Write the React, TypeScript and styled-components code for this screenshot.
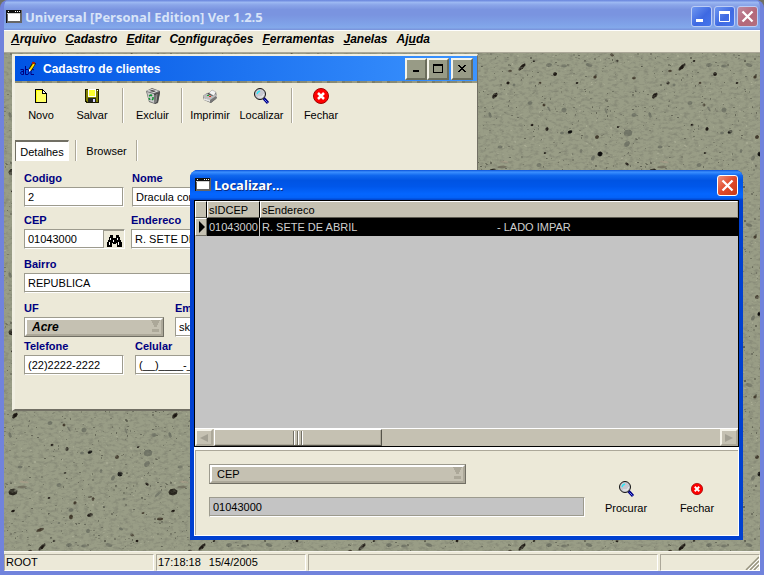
import React, { useState } from "react";
import styled, { createGlobalStyle, css } from "styled-components";

const face = "#ece9d8";
const clay = "#c5c1b2";
const shade = "#aca899";
const dark = "#716f64";
const navy = "#000080";
const sans = '"Liberation Sans", Arial, sans-serif';
const titleFont = '"Open Sans", "Noto Sans", sans-serif';

const GlobalStyle = createGlobalStyle`
  * { box-sizing: border-box; }
  html, body { margin: 0; }
  body { font-family: ${sans}; font-size: 11px; line-height: 14px; color: #000; background: #6f6f62; overflow: hidden; }
  button, input, select { font: inherit; color: inherit; margin: 0; border-radius: 0; }
`;

const bevel = css`
  border: 1px solid;
  border-color: #fff ${dark} ${dark} #fff;
`;

/* ---------- main window ---------- */

const AppWindow = styled.div`
  display: flex;
  flex-direction: column;
  height: 100vh;
  border: solid #7183dc;
  border-width: 0 4px 4px;
  border-radius: 8px 8px 0 0;
  overflow: hidden;
  background: #7183dc;
`;

const AppTitle = styled.header`
  display: flex;
  align-items: center;
  flex: none;
  gap: 3px;
  height: 30px;
  margin: 0 -4px;
  padding: 3px 6px 0;
  background: linear-gradient(#6683dc 0, #9cb8f2 8%, #8ba6e9 16%, #7a94e0 32%, #7a94e0 50%, #7fa2e8 80%, #83a8ea 92%, #7891da 100%);
`;

const AppCaption = styled.h1`
  flex: 1;
  margin: 0;
  font: 700 13px/18px ${titleFont};
  color: #d8e4f8;
`;

const XpButtons = styled.div`
  display: flex;
  gap: 2px;
`;

const XpButton = styled.button<{ $tone: "blue" | "faded" | "red" }>`
  width: 21px;
  height: 21px;
  padding: 0;
  border: 1px solid ${(p) => (p.$tone === "red" ? "#fff" : "#bccdf5")};
  border-radius: 3px;
  background: ${(p) =>
    p.$tone === "blue"
      ? "linear-gradient(135deg, #6f97f0, #3e69e2 55%, #4676ec)"
      : p.$tone === "faded"
        ? "linear-gradient(135deg, #c08a9e, #b4687a 55%, #b3707f)"
        : "linear-gradient(135deg, #f0917a, #e0492a 50%, #c93a16)"};
  svg { display: block; }
`;

const MenuBar = styled.nav`
  display: flex;
  flex: none;
  gap: 9px;
  height: 23px;
  padding: 1px 7px 0;
  border-top: 1px solid #fff;
  border-bottom: 1px solid ${shade};
  background: ${face};
`;

const MenuItem = styled.button`
  padding: 0;
  border: 0;
  background: none;
  font: italic 700 12px/14px ${sans};
  align-self: flex-start;
`;

const Workspace = styled.main`
  position: relative;
  flex: 1;
  overflow: hidden;
  background: #8b8f79;
`;

const StoneCanvas = styled.svg`
  position: absolute;
  inset: 0;
  width: 100%;
  height: 100%;
`;

const StatusBar = styled.footer`
  display: flex;
  flex: none;
  gap: 2px;
  height: 20px;
  padding-top: 2px;
  border-top: 1px solid #f6f4ec;
  background: ${face};
`;

const StatusPane = styled.div<{ $width?: number }>`
  display: flex;
  gap: 8px;
  flex: ${(p) => (p.$width ? `0 0 ${p.$width}px` : "1")};
  padding: 0 1px;
  border: 1px solid;
  border-color: ${shade} #fff #fff ${shade};
  white-space: nowrap;
  &:last-child { justify-content: flex-end; padding: 0; }
`;

/* ---------- client form window ---------- */

const FormWindow = styled.section`
  position: absolute;
  left: 8px;
  top: 1px;
  width: 466px;
  height: 357px;
  display: flex;
  flex-direction: column;
  border: solid;
  border-width: 2px 1px 2px 3px;
  border-color: #f1efe2 ${dark} ${dark} #f1efe2;
  background: ${face};
`;

const FormTitle = styled.header`
  display: flex;
  align-items: center;
  height: 25px;
  padding: 0 4px 0 5px;
  gap: 7px;
  background: linear-gradient(90deg, #0054e3, #3c94ff);
`;

const FormCaption = styled.h2`
  flex: 1;
  margin: 0;
  font: 700 12px/16px ${sans};
  color: #fff;
`;

const StoneStrip = styled.div`
  height: 2px;
  background: repeating-linear-gradient(90deg, #878a75 0 7px, #989b85 7px 12px, #7b7d69 12px 15px);
`;

const ClassicButtons = styled.div`
  display: flex;
`;

const ClassicButton = styled.button`
  width: 22px;
  height: 22px;
  padding: 2px;
  border: 2px solid;
  border-color: #f5f4ea #6b6d5c #6b6d5c #f5f4ea;
  background: #989b86;
  &:last-child { margin-left: 2px; }
  svg { display: block; }
`;

const Toolbar = styled.div`
  display: flex;
  height: 35px;
  margin: 5px 0 0;
`;

const ToolButton = styled.button<{ $width: number }>`
  display: flex;
  flex-direction: column;
  align-items: center;
  width: ${(p) => p.$width}px;
  padding: 0;
  gap: 4px;
  border: 0;
  background: none;
  font-size: 11px;
  white-space: nowrap;
  svg { display: block; flex: none; }
`;

const Divider = styled.span`
  width: 2px;
  flex: none;
  border-left: 1px solid ${shade};
  border-right: 1px solid #fff;
`;

const ToolGroup = styled.div`
  display: flex;
  padding-right: 5px;
`;

const TabStrip = styled.div`
  display: flex;
  height: 21px;
  margin-top: 17px;
`;

const Tab = styled.button<{ $active?: boolean }>`
  width: ${(p) => (p.$active ? 54 : 59)}px;
  margin-right: ${(p) => (p.$active ? 6 : 0)}px;
  padding: 0;
  border: 0 solid;
  border-width: ${(p) => (p.$active ? "2px 1px 0 1px" : "0")};
  border-color: ${dark} #fff #fff ${dark};
  background: ${(p) => (p.$active ? "#fff" : "none")};
`;

const Fields = styled.form`
  display: flex;
  flex-direction: column;
  padding: 10px 0 0 9px;
  overflow: hidden;
`;

const FieldRow = styled.div<{ $gap: number; $space: number }>`
  display: flex;
  gap: ${(p) => p.$gap}px;
  margin-bottom: ${(p) => p.$space}px;
`;

const Field = styled.div<{ $width: number }>`
  display: flex;
  flex-direction: column;
  flex: none;
  gap: 2px;
  width: ${(p) => p.$width}px;
`;

const FieldLabel = styled.label`
  font-weight: 700;
  color: ${navy};
`;

const well = css`
  height: 20px;
  border: 1px solid;
  border-color: #9d9b8e #fff #fff #9d9b8e;
  box-shadow: inset -1px -1px #9d9b8e;
`;

const TextBox = styled.input`
  ${well}
  width: 100%;
  min-width: 0;
  padding: 0 3px;
  background: #fff;
  outline: 0;
`;

const BoxWithButton = styled.div`
  ${well}
  display: flex;
  background: #fff;
`;

const PlainBox = styled.input`
  flex: 1;
  min-width: 0;
  padding: 0 3px;
  border: 0;
  background: none;
  outline: 0;
`;

const LookupButton = styled.button`
  width: 21px;
  padding: 1px 2px;
  border: solid #9d9b8e;
  border-width: 1px 0 0 1px;
  background: ${face};
  svg { display: block; }
`;

const SelectShell = styled.div`
  display: grid;
  height: 20px;
  ${bevel}
  border-top-color: #9d9b8e;
  border-left-color: #9d9b8e;
  background: ${clay};
  > * { grid-area: 1 / 1; }
  svg { justify-self: end; margin: 1px 3px; pointer-events: none; }
`;

const Select = styled.select<{ $strong?: boolean }>`
  appearance: none;
  width: 100%;
  min-width: 0;
  padding: 0 5px;
  border: 2px solid;
  border-color: #fff ${shade} ${shade} #fff;
  background: none;
  outline: 0;
  ${(p) => p.$strong && css`font: italic 700 12px/14px ${sans};`}
`;

/* ---------- search dialog ---------- */

const Dialog = styled.section`
  position: absolute;
  left: 186px;
  top: 117px;
  width: 553px;
  height: 370px;
  display: flex;
  flex-direction: column;
  border: solid #0040d0;
  border-width: 0 4px 4px;
  border-radius: 8px 8px 0 0;
  background: #0a55ea;
`;

const DialogTitle = styled.header`
  display: flex;
  align-items: center;
  gap: 3px;
  height: 30px;
  flex: none;
  margin: 0 -4px;
  padding: 0 5px;
  border-radius: 8px 8px 0 0;
  background: linear-gradient(#0a52d8 0, #3c90ff 7%, #1068ee 18%, #0054e3 35%, #0057ea 55%, #0466ff 80%, #0462f8 92%, #0042c8 100%);
`;

const DialogCaption = styled.h2`
  flex: 1;
  margin: 0;
  font: 700 13px/18px ${titleFont};
  color: #fff;
  text-shadow: 1px 1px #0a2c80;
`;

const GridFrame = styled.div`
  display: flex;
  flex-direction: column;
  flex: 1;
  border: 1px solid #000;
  background: #c4c4c4;
`;

const DataTable = styled.table`
  width: 100%;
  table-layout: fixed;
  border-collapse: separate;
  border-spacing: 0;
  white-space: pre;
`;

const HeadCell = styled.th<{ $width?: number }>`
  ${(p) => p.$width && `width: ${p.$width}px;`}
  height: 17px;
  padding: 0 1px;
  border: 1px solid;
  border-color: #fff #000 #5c5a50 #fff;
  background: ${clay};
  font-weight: 400;
  text-align: left;
  &:last-child { border-right-color: ${shade}; }
`;

const RowMark = styled.td`
  height: 18px;
  padding: 0 3px;
  ${bevel}
  background: ${clay};
  svg { display: block; }
`;

const Cell = styled.td`
  height: 18px;
  padding: 0 1px 0 2px;
  border-right: 1px solid #c4c4c4;
  background: #000;
  color: #d0d0d0;
  &:last-child { border-right-color: #000; }
`;

const Address = styled.span`
  display: grid;
  grid-template-columns: 235px 1fr;
`;

const ScrollBar = styled.div`
  display: flex;
  height: 18px;
  margin-top: auto;
  border-top: 1px solid #fff;
  background: ${clay};
`;

const ScrollButton = styled.button`
  width: 18px;
  padding: 0;
  border: 2px solid;
  border-color: #f4f2e8 ${shade} ${shade} #f4f2e8;
  background: ${clay};
  svg { display: block; margin: auto; }
`;

const ScrollThumb = styled.div`
  display: flex;
  justify-content: center;
  align-items: center;
  gap: 2px;
  width: 168px;
  margin: 0 auto 0 1px;
  border: 1px solid;
  border-color: #fff #55534a #55534a #fff;
  box-shadow: inset -1px -1px ${shade};
`;

const Grip = styled.i`
  width: 2px;
  height: 14px;
  border-left: 1px solid ${dark};
  border-right: 1px solid #fff;
`;

const SearchPanel = styled.form`
  display: flex;
  justify-content: space-between;
  height: 89px;
  padding: 14px 13px 0 14px;
  border: 1px solid #fff;
  border-top: 3px solid #fff;
  box-shadow: inset 1px 1px ${shade};
  background: ${face};
`;

const SearchFields = styled.div`
  display: flex;
  flex-direction: column;
  gap: 13px;
  width: 376px;
`;

const SearchSelect = styled.div`
  width: 257px;
`;

const SearchBox = styled(TextBox)`
  background: #c4c4c4;
`;

const SearchActions = styled.div`
  display: flex;
  gap: 14px;
  padding-top: 17px;
`;

/* ---------- drawings ---------- */

const WindowIcon = () => (
  <svg width="16" height="16" viewBox="0 0 16 16" shapeRendering="crispEdges" aria-hidden="true">
    <path d="M0 1h16v13H0z" fill="#666" />
    <path d="M0 1h15v3H0zM0 1h1v13H0z" fill="#111" />
    <path d="M1 4h13v1H1z" fill="#d0d0d0" />
    <path d="M2 5h12v7H2z" fill="#fff" />
    <path d="M2 2h1v1H2zM9 2h1v1H9zM11 2h1v1h-1zM13 2h1v1h-1z" fill="#fff" />
  </svg>
);

const XpGlyph = ({ kind }: { kind: "min" | "max" | "close" }) => (
  <svg width="19" height="19" viewBox="0 0 19 19" fill="none" stroke="#fff" aria-hidden="true">
    {kind === "min" && <path d="M4 13.5h7" strokeWidth="3" />}
    {kind === "max" && (
      <>
        <path d="M4.5 5.5h10v9h-10z" />
        <path d="M4 5.500h11" strokeWidth="3" />
      </>
    )}
    {kind === "close" && <path d="M4.500 4.500l10 10M14.500 4.500l-10 10" strokeWidth="2.300" />}
  </svg>
);

const ClassicGlyph = ({ kind }: { kind: "min" | "max" | "close" }) => (
  <svg width="14" height="14" viewBox="0 0 14 14" shapeRendering="crispEdges" fill="#000" aria-hidden="true">
    {kind === "min" && <path d="M4 8h6v2H4z" />}
    {kind === "max" && <path fillRule="evenodd" d="M2 2h10v9H2zM3 4h8v6H3z" />}
    {kind === "close" && (
      <path d="M3 3h2v1h1v1h2V4h1V3h2v1h-1v1H9v1H8v1h1v1h1v1h1v1H9V9H8V8H6v1H5v1H3V9h1V8h1V7h1V6H5V5H4V4H3z" />
    )}
  </svg>
);

const AbcIcon = () => (
  <svg width="16" height="16" viewBox="0 0 16 16" aria-hidden="true">
    <g fill="none" stroke="#000080" strokeWidth="1">
      <path d="M.5 8.5h3v5M3.5 10.5h-2L.5 12l1 1.5h2M5.5 5v8.500h2.500l1-1.500V10L8 8.500H5.500M14 9l-1-.5h-2V13.500h3" />
    </g>
    <path d="M14.500 1.500L10 9" stroke="#202000" strokeWidth="3.500" />
    <path d="M14 3l-4 6" stroke="#ffe000" strokeWidth="2" />
    <path d="M12 1h3v2h-3z" fill="#a02010" />
    <path d="M9 8l2 1-2 2z" fill="#fff" />
  </svg>
);

const NewIcon = () => (
  <svg width="16" height="16" viewBox="0 0 16 16" shapeRendering="crispEdges" aria-hidden="true">
    <path d="M2 1h8v1h1v1h1v1h1v1h1v10H2z" fill="#000" />
    <path d="M3 2h6v4h4v8H3z" fill="#ffff66" />
    <path d="M10 3v2h2V4h-1V3z" fill="#fff" />
    <path d="M3 2h6v1H3zM3 2h1v12H3z" fill="#ffff00" />
  </svg>
);

const SaveIcon = () => (
  <svg width="16" height="16" viewBox="0 0 16 16" shapeRendering="crispEdges" aria-hidden="true">
    <path d="M1 1h14v14H2v-1H1z" fill="#1a1a00" />
    <path d="M2 2h12v12H3v-1H2z" fill="#808000" />
    <path d="M4 1h8v8H4z" fill="#fff" />
    <path d="M5 2h6v6H5z" fill="#ffff30" />
    <path d="M13 2h1v1h-1z" fill="#fff" />
    <path d="M4 10h8v4H4z" fill="#222" />
    <path d="M9 11h2v3H9z" fill="#d8d8ff" />
  </svg>
);

const BinIcon = () => (
  <svg width="18" height="16" viewBox="0 0 18 16" aria-hidden="true">
    <path d="M2 3l6-3 8 3v2l-2 10-3 1-6-2z" fill="#666" />
    <path d="M3 4l7 2v9l-5-2z" fill="#c9c9c9" />
    <path d="M10 6l6-2-2 10-3 2z" fill="#4b4b4b" />
    <path d="M2 3l6-2 7 2-5 2z" fill="#e2e2e2" />
    <path d="M5 3l3-1 4 1-2 1z" fill="#444" />
    <path d="M5 8l2-1 1 1M9 9v2l-1 1M6 12l-1-2" fill="none" stroke="#109030" strokeWidth="1.500" />
    <path d="M11 7v8M13 6l-1 8" stroke="#999" />
  </svg>
);

const PrinterIcon = () => (
  <svg width="16" height="16" viewBox="0 0 16 16" aria-hidden="true">
    <path d="M1 8l4-3 9-1 1 6-6 5-7-3z" fill="#505050" />
    <path d="M7 5l3-3 4 2-2 4z" fill="#f4f4f4" stroke="#999" strokeWidth=".5" />
    <path d="M1 8l4-3 2 2 4 1 2-2 2 1v2l-6 4-7-3z" fill="#bdbdbd" />
    <path d="M2 10l6 2v2l-6-2z" fill="#e4e4e4" />
    <path d="M8 12l6-4v3l-6 4z" fill="#777" />
    <path d="M5 7h2v1H5z" fill="#20a030" />
    <path d="M7 8h2v1H7z" fill="#e03020" />
  </svg>
);

const LensIcon = () => (
  <svg width="17" height="16" viewBox="0 0 17 16" aria-hidden="true">
    <path d="M10.500 10l4.500 5" stroke="#000080" strokeWidth="3" />
    <path d="M11.500 11.500l3 3" stroke="#6a7cff" strokeWidth="1" />
    <circle cx="7" cy="6" r="5.500" fill="#c8c8d0" stroke="#111" />
    <path d="M4 6l1-2 2-1" fill="none" stroke="#30e8f8" strokeWidth="1.500" />
    <path d="M5 9h4l2-3" fill="none" stroke="#eee" />
  </svg>
);

const CloseIcon = ({ size }: { size: number }) => (
  <svg width="16" height="16" viewBox="0 0 16 16" aria-hidden="true">
    <g transform={`translate(8 8) scale(${size / 16})`}>
      <circle r="7.500" fill="#ff0000" stroke="#a00000" />
      <path d="M-3-3L3 3M3-3L-3 3" stroke="#fff" strokeWidth="2.500" />
    </g>
  </svg>
);

const BinocularsIcon = () => (
  <svg width="16" height="17" viewBox="0 0 16 17" shapeRendering="crispEdges" aria-hidden="true">
    <path d="M4 3h3v3h3V3h3v2h1v3h1v2h1v5h-5v-4h-1v1H7v-1H6v4H1v-5h1V8h1V5h1z" fill="#000" />
    <path d="M4 6h1v2H4zM3 10h1v3H3zM7 8h1v2H7zM11 6h1v2h-1zM12 10h1v3h-1z" fill="#fff" />
  </svg>
);

const DropGlyph = () => (
  <svg width="9" height="15" viewBox="0 0 9 15" shapeRendering="crispEdges" aria-hidden="true">
    <path d="M0 1h9v1H8v2H7v2H6v2H3V6H2V4H1V2H0zM1 10h7v3H1z" fill={shade} />
  </svg>
);

const ScrollArrow = ({ flip }: { flip?: boolean }) => (
  <svg width="8" height="10" viewBox="0 0 8 10" aria-hidden="true">
    <path d={flip ? "M0 1l8 4-8 4z" : "M8 1L0 5l8 4z"} fill="#a3a093" />
  </svg>
);

const ResizeGrip = () => (
  <svg width="14" height="15" viewBox="0 0 14 15" aria-hidden="true">
    <path d="M1 15L14 2M5 15l9-9M9 15l5-5" stroke="#96937f" strokeWidth="1.500" />
    <path d="M3 15L14 4M7 15l7-7M11 15l3-3" stroke="#fff" />
  </svg>
);

/* Chips of the stone tile: x, y, half width, half height, angle, colour */
const black = "#17120e";
const grey = "#62665b";
const brown = "#3e3628";
type Chip = [number, number, number, number, number, string];
const chips: Chip[] = [
  [10, 43, 1.6, 3, 20, black], [46, 50, 2.5, 2, 0, grey], [60, 52, 1.5, 1.5, 0, brown],
  [65, 56, 1, 3, -30, grey], [80, 57, 2.6, 2.6, 0, grey], [122, 58, 1, 3, -20, grey],
  [150, 62, 2.6, 2, 0, grey], [6, 62, 1.5, 3, -20, grey], [48, 72, 1.5, 1.2, 0, black],
  [63, 76, 1.6, 2, 0, black], [86, 79, 2.5, 1.6, -20, "#050505"], [78, 80, 2, 1.5, 0, grey],
  [113, 84, 2, 2, 0, brown], [144, 80, 4.5, 3.6, 0, grey], [134, 74, 1.2, 1, 0, black],
  [143, 91, 3.5, 2.5, -40, grey], [16, 94, 2.5, 1.6, 0, grey], [116, 101, 2.6, 2.4, 0, "#050505"],
  [109, 105, 1.8, 3, 20, grey], [61, 100, 1.3, 1, 0, black], [55, 112, 2.5, 2, 0, grey],
  [143, 111, 2.1, 1.3, 40, black], [9, 119, 4.6, 3.4, 0, "#221e17"], [20, 109, 5, 1.2, 8, "#a59d88"],
  [18, 114, 5, 1.4, 0, "#72705f"], [154, 121, 4.5, 1.4, -42, "#75796a"], [45, 125, 1.4, 1, 0, black],
  [86, 124, 2, 1, 0, brown], [89, 126, 1.3, 2, 0, brown], [71, 130, 1.6, 1.8, 0, brown],
  [67, 137, 2.6, 2, 0, grey], [67, 144, 2, 2.4, 0, brown], [86, 142, 3, 1.8, -10, black],
  [9, 138, 2, 1.2, -20, black], [156, 146, 3.2, 1.6, 0, brown], [139, 140, 1.5, 1, 0, brown],
  [120, 126, 1.5, 1.3, 0, grey], [36, 157, 4.2, 1.6, -18, brown], [84, 158, 2, 2.3, 0, grey],
  [117, 156, 2.2, 1.5, 25, grey], [38, 14, 4.8, 1.7, -42, black], [65, 12, 3, 2, 0, grey],
  [80, 13, 3, 1.5, 0, grey], [26, 18, 2, 1.3, 0, brown], [50, 8, 1.3, 1, 0, black],
  [128, 2, 2, 1.5, 30, brown], [71, 21, 2, 2, 0, black], [105, 12, 3.5, 1.8, 20, grey],
  [111, 24, 1.7, 1.7, 0, brown], [24, 30, 1.6, 1.6, 0, black], [56, 30, 1.4, 1.2, 0, brown],
  [12, 42, 1.4, 2.6, 20, black], [93, 30, 1.4, 1, 0, black], [30, 32, 1.5, 1.5, 0, grey],
  [133, 8, 1.5, 1.2, 0, black], [150, 25, 2, 1.4, 0, brown], [55, 150, 1.4, 1, 0, grey],
  [97, 98, 1.3, 2, 0, grey],
];

const specks = (() => {
  let seed = 71;
  const next = () => (seed = (seed * 16807) % 2147483647) / 2147483647;
  return Array.from({ length: 520 }, () => ({
    x: Math.floor(next() * 160),
    y: Math.floor(next() * 160),
    w: next() > 0.6 ? 2 : 1,
    h: next() > 0.8 ? 2 : 1,
    dark: next() > 0.4,
    o: 0.2 + next() * 0.5,
  }));
})();

const Stone = () => (
  <StoneCanvas aria-hidden="true">
    <defs>
      <pattern id="stone" width="160" height="160" patternUnits="userSpaceOnUse">
        <rect width="160" height="160" fill="#999d86" />
        {specks.map((s, i) => (
          <rect key={i} x={s.x} y={s.y} width={s.w} height={s.h} opacity={s.o} fill={s.dark ? "#45463b" : "#b0b29a"} />
        ))}
        {chips.map(([x, y, rx, ry, a, fill], i) => (
          <g key={i} transform={`translate(${x} ${y}) rotate(${a})`} opacity={fill === grey ? 0.75 : 0.95}>
            <path
              d={`M${-rx} 0L${-rx * 0.6} ${-ry * 0.8}L${rx * 0.3} ${-ry}L${rx} ${-ry * 0.4}L${rx * 0.8} ${ry * 0.6}L0 ${ry}L${-rx * 0.8} ${ry * 0.7}z`}
              fill={fill}
            />
          </g>
        ))}
      </pattern>
      <filter id="grain" x="0" y="0" width="100%" height="100%">
        <feTurbulence type="fractalNoise" baseFrequency="0.2 0.35" numOctaves="3" seed="4" />
        <feColorMatrix values="0 0 0 0 0.22  0 0 0 0 0.23  0 0 0 0 0.17  2 0 0 0 -0.88" />
      </filter>
    </defs>
    <rect width="100%" height="100%" fill="url(#stone)" />
    <rect width="100%" height="100%" filter="url(#grain)" />
  </StoneCanvas>
);

/* ---------- pieces ---------- */

const menu: [string, string, string][] = [
  ["", "A", "rquivo"],
  ["", "C", "adastro"],
  ["", "E", "ditar"],
  ["C", "o", "nfigurações"],
  ["", "F", "erramentas"],
  ["", "J", "anelas"],
  ["Aj", "u", "da"],
];

const LabeledInput = ({ id, label, value, width }: { id: string; label: string; value: string; width: number }) => (
  <Field $width={width}>
    <FieldLabel htmlFor={id}>{label}</FieldLabel>
    <TextBox id={id} defaultValue={value} />
  </Field>
);

const ClientForm = () => (
  <FormWindow aria-label="Cadastro de clientes">
    <FormTitle>
      <AbcIcon />
      <FormCaption>Cadastro de clientes</FormCaption>
      <ClassicButtons>
        <ClassicButton aria-label="Minimizar"><ClassicGlyph kind="min" /></ClassicButton>
        <ClassicButton aria-label="Maximizar"><ClassicGlyph kind="max" /></ClassicButton>
        <ClassicButton aria-label="Fechar janela"><ClassicGlyph kind="close" /></ClassicButton>
      </ClassicButtons>
    </FormTitle>
    <StoneStrip />
    <Toolbar>
      <ToolGroup>
        <ToolButton $width={52}><NewIcon />Novo</ToolButton>
        <ToolButton $width={50}><SaveIcon />Salvar</ToolButton>
      </ToolGroup>
      <Divider />
      <ToolButton $width={57}><BinIcon />Excluir</ToolButton>
      <Divider />
      <ToolGroup>
        <ToolButton $width={54}><PrinterIcon />Imprimir</ToolButton>
        <ToolButton $width={49}><LensIcon />Localizar</ToolButton>
      </ToolGroup>
      <Divider />
      <ToolButton $width={56}><CloseIcon size={16} />Fechar</ToolButton>
    </Toolbar>
    <TabStrip role="tablist">
      <Tab role="tab" aria-selected="true" $active>Detalhes</Tab>
      <Divider />
      <Tab role="tab" aria-selected="false">Browser</Tab>
      <Divider />
    </TabStrip>
    <Fields>
      <FieldRow $gap={8} $space={6}>
        <LabeledInput id="codigo" label="Codigo" value="2" width={100} />
        <LabeledInput id="nome" label="Nome" value="Dracula con" width={320} />
      </FieldRow>
      <FieldRow $gap={6} $space={8}>
        <Field $width={101}>
          <FieldLabel htmlFor="cep">CEP</FieldLabel>
          <BoxWithButton>
            <PlainBox id="cep" defaultValue="01043000" />
            <LookupButton type="button" aria-label="Buscar CEP"><BinocularsIcon /></LookupButton>
          </BoxWithButton>
        </Field>
        <LabeledInput id="endereco" label="Endereco" value="R. SETE DE ABRIL" width={320} />
      </FieldRow>
      <FieldRow $gap={8} $space={8}>
        <LabeledInput id="bairro" label="Bairro" value="REPUBLICA" width={220} />
      </FieldRow>
      <FieldRow $gap={11} $space={2}>
        <Field $width={140}>
          <FieldLabel htmlFor="uf">UF</FieldLabel>
          <SelectShell>
            <Select id="uf" $strong defaultValue="Acre"><option>Acre</option></Select>
            <DropGlyph />
          </SelectShell>
        </Field>
        <LabeledInput id="email" label="Email" value="sk" width={240} />
      </FieldRow>
      <FieldRow $gap={11} $space={0}>
        <LabeledInput id="telefone" label="Telefone" value="(22)2222-2222" width={100} />
        <LabeledInput id="celular" label="Celular" value="(__)____-____" width={100} />
      </FieldRow>
    </Fields>
  </FormWindow>
);

const SearchDialog = () => {
  const [term, setTerm] = useState("01043000");
  return (
    <Dialog role="dialog" aria-label="Localizar">
      <DialogTitle>
        <WindowIcon />
        <DialogCaption>Localizar...</DialogCaption>
        <XpButton $tone="red" aria-label="Fechar diálogo"><XpGlyph kind="close" /></XpButton>
      </DialogTitle>
      <GridFrame>
        <DataTable>
          <thead>
            <tr>
              <HeadCell $width={12} />
              <HeadCell $width={53}>sIDCEP</HeadCell>
              <HeadCell>sEndereco</HeadCell>
            </tr>
          </thead>
          <tbody>
            <tr>
              <RowMark>
                <svg width="6" height="12" viewBox="0 0 6 12" aria-hidden="true"><path d="M0 0l6 6-6 6z" /></svg>
              </RowMark>
              <Cell>01043000</Cell>
              <Cell>
                <Address>
                  <span>R. SETE DE ABRIL</span>
                  <span>- LADO IMPAR</span>
                </Address>
              </Cell>
            </tr>
          </tbody>
        </DataTable>
        <ScrollBar>
          <ScrollButton aria-label="Rolar para a esquerda"><ScrollArrow /></ScrollButton>
          <ScrollThumb><Grip /><Grip /><Grip /></ScrollThumb>
          <ScrollButton aria-label="Rolar para a direita"><ScrollArrow flip /></ScrollButton>
        </ScrollBar>
      </GridFrame>
      <SearchPanel onSubmit={(e) => e.preventDefault()}>
        <SearchFields>
          <SearchSelect>
            <SelectShell>
              <Select aria-label="Campo de busca" defaultValue="CEP"><option>CEP</option></Select>
              <DropGlyph />
            </SelectShell>
          </SearchSelect>
          <SearchBox aria-label="Valor" value={term} onChange={(e) => setTerm(e.target.value)} />
        </SearchFields>
        <SearchActions>
          <ToolButton $width={58} type="submit"><LensIcon />Procurar</ToolButton>
          <ToolButton $width={56} type="button"><CloseIcon size={12} />Fechar</ToolButton>
        </SearchActions>
      </SearchPanel>
    </Dialog>
  );
};

export default function App() {
  return (
    <>
      <GlobalStyle />
      <AppWindow>
        <AppTitle>
          <WindowIcon />
          <AppCaption>Universal [Personal Edition] Ver 1.2.5</AppCaption>
          <XpButtons>
            <XpButton $tone="blue" aria-label="Minimizar aplicativo"><XpGlyph kind="min" /></XpButton>
            <XpButton $tone="blue" aria-label="Maximizar aplicativo"><XpGlyph kind="max" /></XpButton>
            <XpButton $tone="faded" aria-label="Fechar aplicativo"><XpGlyph kind="close" /></XpButton>
          </XpButtons>
        </AppTitle>
        <MenuBar>
          {menu.map(([before, key, after]) => (
            <MenuItem key={before + key + after}>{before}<u>{key}</u>{after}</MenuItem>
          ))}
        </MenuBar>
        <Workspace>
          <Stone />
          <ClientForm />
          <SearchDialog />
        </Workspace>
        <StatusBar>
          <StatusPane $width={150}>ROOT</StatusPane>
          <StatusPane $width={150}><span>17:18:18</span><span>15/4/2005</span></StatusPane>
          <StatusPane />
          <StatusPane $width={100}><ResizeGrip /></StatusPane>
        </StatusBar>
      </AppWindow>
    </>
  );
}
